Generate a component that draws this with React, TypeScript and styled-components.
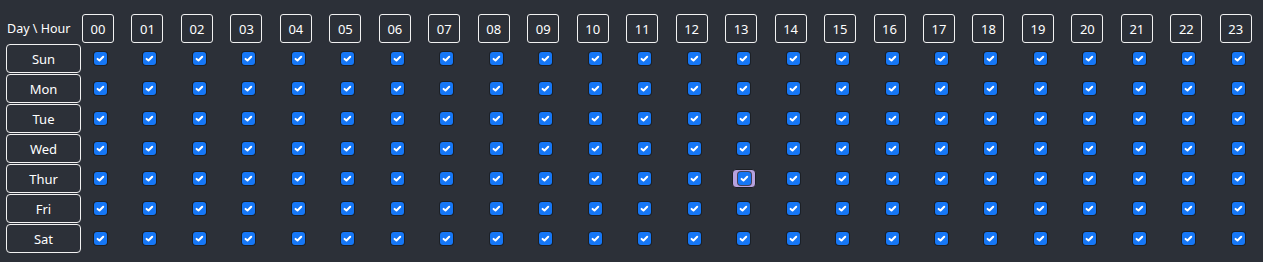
import * as React from 'react';
import styled, {createGlobalStyle} from 'styled-components';

const GlobalStyle = createGlobalStyle`
    body {
        margin: 0;
        background-color: #2c3038;
        font-family: "Noto Sans", "Open Sans", sans-serif;
        color: #ffffff;
        overflow: hidden;
    }
`;

const Schedule = styled.div`
    display: grid;
    grid-template-columns: 82px repeat(23, 49.48px) 1fr;
    grid-auto-rows: 30px;
    padding-top: 14px;
    width: 1263px;
`;

const CornerCell = styled.div`
    display: flex;
    align-items: center;
    padding-left: 7px;
    height: 29px;
    font-size: 12.5px;
    white-space: nowrap;
`;

const HourCell = styled.div`
    display: flex;
    align-items: flex-start;
`;

const HourBox = styled.div`
    box-sizing: border-box;
    width: 32px;
    height: 29px;
    border: 1.5px solid #f2f2f2;
    border-radius: 3px;
    display: flex;
    align-items: center;
    justify-content: center;
    font-size: 13px;
`;

const DayCell = styled.div`
    padding-left: 6px;
`;

const DayButton = styled.button`
    box-sizing: border-box;
    width: 75px;
    height: 29px;
    background: transparent;
    border: 1.5px solid #f2f2f2;
    border-radius: 4px;
    color: #ffffff;
    font-family: inherit;
    font-size: 13px;
    padding: 0;
`;

const SlotCell = styled.div`
    display: flex;
    align-items: center;
    padding-left: 12px;
    height: 29px;
`;

const SlotWrap = styled.span<{ $active?: boolean }>`
    display: inline-flex;
    align-items: center;
    justify-content: center;
    box-sizing: border-box;
    width: 13px;
    height: 13px;
    ${(p) => p.$active && `
        width: 24px;
        height: 19px;
        margin-left: -5px;
        background: #b7a1dd;
        border: 1px solid #1d1f24;
        border-radius: 4px;
    `}
`;

const SlotBox = styled.span`
    display: inline-flex;
    align-items: center;
    justify-content: center;
    flex: none;
    width: 13px;
    height: 13px;
    border-radius: 3px;
    background: #1677f6;
    box-shadow: 0 0 0 1px rgba(20, 24, 30, 0.7);
    cursor: pointer;
`;

const Tick: React.FC = () => (
    <svg width="13" height="13" viewBox="0 0 13 13">
        <path d="M3.6 6.9 L5.5 8.5 L9.2 4.7" fill="none" stroke="#ffffff" strokeWidth="2" strokeLinecap="round" strokeLinejoin="round"/>
    </svg>
);

const days = ['Sun', 'Mon', 'Tue', 'Wed', 'Thur', 'Fri', 'Sat'];
const hours = Array.from({length: 24}, (_, i) => String(i).padStart(2, '0'));

const App: React.FC = () => {
    return (
        <>
            <GlobalStyle/>
            <Schedule>
                <CornerCell>Day \ Hour</CornerCell>
                {hours.map((h) => (
                    <HourCell key={h}><HourBox>{h}</HourBox></HourCell>
                ))}
                {days.map((d) => (
                    <React.Fragment key={d}>
                        <DayCell><DayButton>{d}</DayButton></DayCell>
                        {hours.map((h) => (
                            <SlotCell key={h}>
                                <SlotWrap $active={d === 'Thur' && h === '13'}>
                                    <SlotBox role="checkbox" aria-checked="true"><Tick/></SlotBox>
                                </SlotWrap>
                            </SlotCell>
                        ))}
                    </React.Fragment>
                ))}
            </Schedule>
        </>
    );
};

export default App;
